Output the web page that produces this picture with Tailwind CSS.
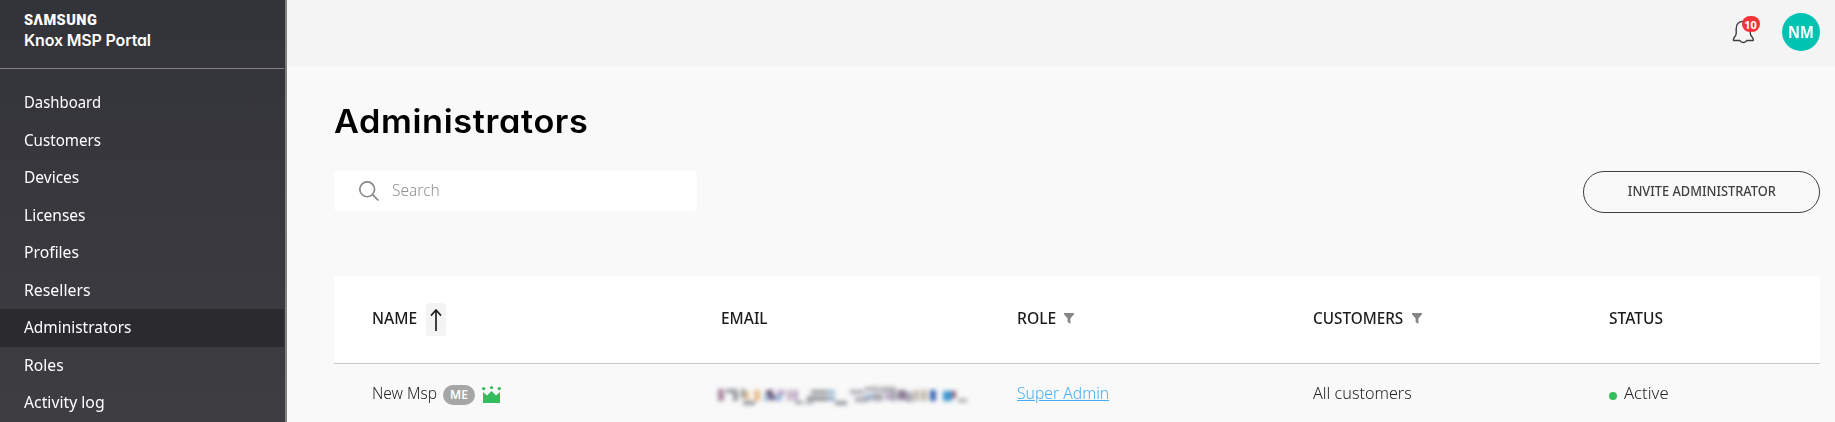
<!DOCTYPE html>
<html lang="en">
<head>
<meta charset="utf-8">
<title>Administrators</title>
<script src="https://cdn.jsdelivr.net/npm/@tailwindcss/browser@4"></script>
</head>
<body class="flex h-[422px] w-[1835px] overflow-hidden bg-[#f9f9f9] font-['Noto_Sans',sans-serif] text-base text-[#252525]">
<aside class="flex w-[287px] shrink-0 flex-col border-r-2 border-[#808080] bg-linear-to-b from-[#333439] to-[#3d3d42] pr-px text-white">
  <div class="flex h-[69px] shrink-0 flex-col border-b border-[#808080] pt-[13px] pl-6">
    <span class="font-['Roboto',sans-serif] text-[14.5px] leading-4 font-black tracking-[0.5px]" aria-label="Samsung">SΛMSUNG</span>
    <span class="font-['Inter',sans-serif] text-base leading-[22px] font-semibold tracking-[-0.17px] whitespace-nowrap [font-feature-settings:'cv11']">Knox MSP Portal</span>
  </div>
  <nav class="flex flex-col pt-[15px]">
    <a class="flex h-[37.55px] shrink-0 items-center pb-[1.4px] pl-[23.5px]"><span class="origin-left scale-x-[.93]">Dashboard</span></a>
    <a class="flex h-[37.55px] shrink-0 items-center pb-[1.4px] pl-[23.5px]"><span class="origin-left scale-x-[.947]">Customers</span></a>
    <a class="flex h-[37.55px] shrink-0 items-center pb-[1.4px] pl-[23.5px]"><span class="origin-left scale-x-[.97]">Devices</span></a>
    <a class="flex h-[37.55px] shrink-0 items-center pb-[1.4px] pl-[23.5px]"><span class="origin-left scale-x-[.97]">Licenses</span></a>
    <a class="flex h-[37.55px] shrink-0 items-center pb-[1.4px] pl-[23.5px]"><span class="origin-left scale-x-[.98]">Profiles</span></a>
    <a class="flex h-[37.55px] shrink-0 items-center pb-[1.4px] pl-[23.5px]"><span class="origin-left scale-x-[.99]">Resellers</span></a>
    <a class="flex h-[37.55px] shrink-0 items-center bg-[#2b2b2f] pb-[1.4px] pl-6"><span class="origin-left scale-x-[.963]">Administrators</span></a>
    <a class="flex h-[37.55px] shrink-0 items-center pb-[1.4px] pl-[23.5px]"><span class="origin-left scale-x-[.98]">Roles</span></a>
    <a class="flex h-[37.55px] shrink-0 items-center pb-[1.4px] pl-6"><span class="origin-left scale-x-[.985]">Activity log</span></a>
  </nav>
</aside>
<div class="flex min-w-0 flex-1 flex-col">
  <header class="flex h-[67px] shrink-0 items-start justify-end bg-[#f4f4f4] pr-[15px]">
    <div class="relative mt-[14px] mr-[23px] h-8 w-[30px]">
      <svg class="h-8 w-[30px]" viewBox="0 0 30 32" fill="none" stroke="#3c3c3c" stroke-width="1.4" stroke-linejoin="round" stroke-linecap="round"><path d="M14.2 7.4C9.5 7.6 7.2 10.7 7.2 14.7v4.8c0 2.6-2.7 4-2.7 5.5v1.5h6.5c.5 1.3 1.5 2 3.4 2s2.8-.7 3.3-2h6.5V25c0-1.5-2.9-2.9-2.9-5.5v-4.8c0-4-2.4-7.1-7.1-7.3z"/></svg>
      <span class="absolute top-[2px] left-[12.5px] flex h-4 w-[18px] items-center justify-center rounded-full bg-[#f53338] text-[11px] leading-none font-bold text-white">10</span>
    </div>
    <div class="mt-[13px] flex size-[38px] items-center justify-center rounded-full bg-[#00c3b2] font-bold text-white"><span class="scale-x-[.92]">NM</span></div>
  </header>
  <main class="flex flex-1 flex-col pr-[15px] pl-[47px]">
    <h1 class="mt-[35px] origin-left scale-x-[1.07] font-['Inter',sans-serif] text-[32px] leading-10 font-semibold tracking-[0.6px] text-black [font-feature-settings:'cv11']">Administrators</h1>
    <div class="mt-[29px] flex items-start justify-between">
      <div class="flex h-10 w-[363px] items-center rounded bg-white pl-[25px]">
        <svg class="size-5 shrink-0" viewBox="0 0 20 20" fill="none" stroke="#858585" stroke-width="1.6"><circle cx="8.2" cy="8.3" r="7.4"/><path d="M13.5 13.6 19.4 19.5"/></svg>
        <span class="mb-[2px] ml-[13px] origin-left scale-x-[.97] font-light text-[#909090]">Search</span>
      </div>
      <button class="flex h-[42px] w-[237px] items-center justify-center rounded-full border border-[#404040] pb-[2px] text-sm font-medium text-[#404040]"><span class="scale-x-[.915] whitespace-nowrap">INVITE ADMINISTRATOR</span></button>
    </div>
    <section class="mt-[63px] flex flex-col">
      <div class="grid h-[88px] grid-cols-[349px_296px_296px_1fr] items-center border-b border-[#c8c8c8] bg-white pl-[37.5px] font-medium text-[#1c1c1c]">
        <div class="flex items-center"><span class="mb-[3px] w-[45px] origin-left scale-x-[.97]">NAME</span>
          <span class="ml-[9.5px] flex h-[33px] w-5 items-center justify-center rounded-[3px] bg-[#f4f4f4]"><svg class="h-[22px] w-3" viewBox="0 0 12 22" fill="none" stroke="#222" stroke-width="1.7"><path d="M6 22V1M1 6.6 6 1l5 5.6"/></svg></span>
        </div>
        <div class="pb-[3px]"><span class="inline-block origin-left scale-x-[.965]">EMAIL</span></div>
        <div class="flex items-center pb-[3px]"><span class="w-10 origin-left scale-x-[.98]">ROLE</span><svg class="ml-[7.5px] h-[11px] w-[10px]" viewBox="0 0 10 11" fill="#868686"><path d="M0 0h10v1.2L6.4 5.6V11L3.6 9V5.6L0 1.2z"/></svg></div>
        <div class="grid grid-cols-[296px_1fr] pb-[3px]">
          <div class="flex items-center"><span class="w-[91px] origin-left scale-x-[.955]">CUSTOMERS</span><svg class="ml-2 h-[11px] w-[10px]" viewBox="0 0 10 11" fill="#868686"><path d="M0 0h10v1.2L6.4 5.6V11L3.6 9V5.6L0 1.2z"/></svg></div>
          <div class="pl-[0.5px]"><span class="inline-block origin-left scale-x-[.97]">STATUS</span></div>
        </div>
      </div>
      <div class="grid h-[60px] grid-cols-[349px_296px_296px_296px_1fr] items-center pl-[38px] font-light">
        <div class="flex items-center"><span class="mb-[2px] w-[66px] origin-left scale-x-[.97] whitespace-nowrap">New Msp</span>
          <span class="mt-[2px] ml-[5px] flex h-5 w-8 items-center justify-center rounded-full bg-[#a6a6a6] text-[12px] font-semibold text-white">ME</span>
          <svg class="ml-[7px] h-[17px] w-[19px]" viewBox="0 0 19 17" fill="#33bd5c"><path d="M1 6l4 3.4L9.5 5l4.5 4.4L18 6v11H1z"/><circle cx="1.7" cy="2.6" r="1.7"/><circle cx="9.5" cy="1.6" r="1.6"/><circle cx="17.3" cy="2.6" r="1.7"/></svg>
        </div>
        <!-- Redacted e-mail address -->
        <div><svg class="mt-[2px] -ml-[6px] h-[26px] w-[256px] blur-[2.3px]" viewBox="0 0 256 26" aria-hidden="true">
          <g fill="#a987a3"><path d="M3 7h6v12H3z"/><path d="M72 8h5v11h-5z" opacity=".6"/></g>
          <g fill="#94989c"><path d="M11 7h11v4H11zM18 9h5v10h-5zM26 7h4v9h-4zM92 14h28v5H92zM96 8h18v4H96zM90 20h8v2h-8zM120 19h12v4h-12zM80 19h8v3h-8zM28 19h12v4H28zM243 17h9v3h-9z"/></g>
          <path fill="#e6bd8c" d="M30 9h4v9h-4zM39 8h6v11h-6z"/>
          <g fill="#6d5c7c"><path d="M51 8h7v5h-7zM54 13h6v5h-6z"/><path d="M183 8h8v10h-8z" opacity=".8"/></g>
          <path fill="#9bb8d6" d="M60 13h7v6h-7zM49 13h5v6h-5zM112 8h8v4h-8zM112 15h8v4h-8zM150 12h8v6h-8z"/>
          <path fill="#bba8c8" d="M62 8h8v5h-8zM78 8h5v10h-5zM170 11h7v7h-7z"/>
          <path fill="#aaaab2" d="M135 8h14v4h-14zM140 15h14v5h-14zM150 5h15v4h-15zM158 11h10v8h-10zM166 5h15v5h-15zM176 9h6v10h-6zM191 10h7v10h-7z"/>
          <path fill="#c3b9ae" d="M199 8h5v11h-5zM206 8h6v11h-6z"/>
          <path fill="#3a66b2" d="M215 8h6v11h-6z"/>
          <path fill="#3f95d0" d="M228 9h9v10h-9z"/>
          <path fill="#946070" d="M237 9h4v7h-4z"/>
        </svg></div>
        <div class="pb-[2px]"><a class="inline-block origin-left scale-x-[.98] text-[#45aef5] underline">Super Admin</a></div>
        <div class="pb-[2px]"><span class="inline-block origin-left scale-x-[1.01]">All customers</span></div>
        <div class="flex items-center"><span class="mt-[3px] size-2 rounded-full bg-[#33bd5c]"></span><span class="mb-[2px] ml-[6.5px] origin-left scale-x-[1.04]">Active</span></div>
      </div>
    </section>
  </main>
</div>
</body>
</html>
